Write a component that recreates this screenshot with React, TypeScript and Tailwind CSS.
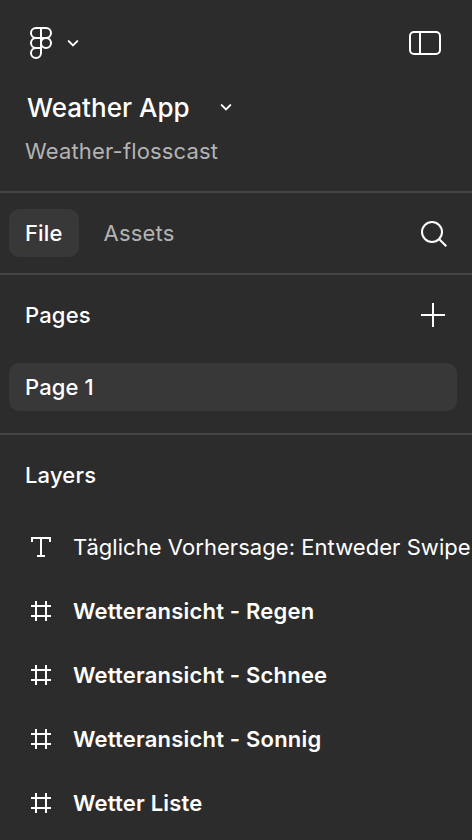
import type { ReactNode } from 'react';

type IconProps = { className?: string; width: number; height: number; children: ReactNode };

function Icon({ className = '', width, height, children }: IconProps) {
  return (
    <svg
      className={`shrink-0 ${className}`}
      width={width}
      height={height}
      viewBox={`0 0 ${width} ${height}`}
      fill="none"
      stroke="currentColor"
      strokeWidth="2"
    >
      {children}
    </svg>
  );
}

const FigmaLogo = () => (
  <Icon width={22} height={32}>
    <path d="M11 1H6a5 5 0 0 0 0 10h5zM11 1h5a5 5 0 0 1 0 10h-5M11 11H6a5 5 0 0 0 0 10h5zM11 21H6a5 5 0 1 0 5 5z" />
    <circle cx="16" cy="16" r="5" />
  </Icon>
);

const Chevron = ({ className }: { className?: string }) => (
  <Icon width={12} height={8} className={className}>
    <path d="M1.7 2.1 6 6.4l4.3-4.3" strokeLinecap="round" />
  </Icon>
);

const FrameIcon = () => (
  <Icon width={20} height={20}>
    <path d="M5 0v20M15 0v20M0 5h20M0 15h20" />
  </Icon>
);

const TextIcon = () => (
  <Icon width={20} height={20}>
    <path d="M1 5V1h18v4M10 1v18M6 19h8" />
  </Icon>
);

const layers = [
  { name: 'Tägliche Vorhersage: Entweder Swipe', text: true },
  { name: 'Wetteransicht - Regen' },
  { name: 'Wetteransicht - Schnee' },
  { name: 'Wetteransicht - Sonnig' },
  { name: 'Wetter Liste' },
];

export default function App() {
  return (
    <div className="h-[840px] w-[472px] overflow-hidden whitespace-nowrap bg-[#2c2c2c] font-['Inter',sans-serif] text-[22px] leading-8 tracking-[0.11px] text-white">
      <header className="h-[193px] border-b-2 border-[#444444] pt-[27px]">
        <div className="flex h-8 items-center pr-[31px] pl-[30px]">
          <FigmaLogo />
          <Chevron className="ml-[15px]" />
          <Icon width={32} height={24} className="ml-auto">
            <rect x="1" y="1" width="30" height="22" rx="4" />
            <path d="M11 1v22" />
          </Icon>
        </div>
        <div className="mt-8 flex h-8 items-center pl-[27px]">
          <h1 className="w-[193px] pt-0.5 text-[26px] font-medium tracking-[0.02px]">Weather App</h1>
          <Chevron />
        </div>
        <p className="mt-3 pl-[25px] tracking-[0.17px] text-[#b3b3b3]">Weather-flosscast</p>
      </header>

      <nav className="flex h-[82px] items-center border-b-2 border-[#444444] pr-[25px] pl-[9px]">
        <button className="h-12 w-[70px] rounded-[10px] bg-[#383838] pl-4 text-left font-medium">File</button>
        <button className="ml-[24.5px] tracking-[0.2px] text-[#b3b3b3]">Assets</button>
        <Icon width={26} height={26} className="mt-0.5 ml-auto">
          <circle cx="11" cy="11" r="10" />
          <path d="m18 18 7.3 7.3" />
        </Icon>
      </nav>

      <section className="h-[160px] border-b-2 border-[#444444]">
        <div className="flex h-20 items-center justify-between pr-[27px] pl-[25px]">
          <h2 className="font-medium tracking-[0.18px]">Pages</h2>
          <Icon width={24} height={24}>
            <path d="M12 0v24M0 12h24" />
          </Icon>
        </div>
        <div className="mt-2 mr-[15px] ml-[9px] flex h-12 items-center rounded-[10px] bg-[#383838] pl-4 font-medium">
          Page 1
        </div>
      </section>

      <section>
        <h2 className="flex h-20 items-center pl-[25px] font-medium tracking-[0.18px]">Layers</h2>
        <ul>
          {layers.map((layer) => (
            <li key={layer.name} className="flex h-16 items-center gap-[22px] pl-[31px]">
              {layer.text ? <TextIcon /> : <FrameIcon />}
              <span className={layer.text ? 'font-normal tracking-[0.05px]' : 'font-semibold tracking-[0.2px]'}>
                {layer.name}
              </span>
            </li>
          ))}
        </ul>
      </section>
    </div>
  );
}
